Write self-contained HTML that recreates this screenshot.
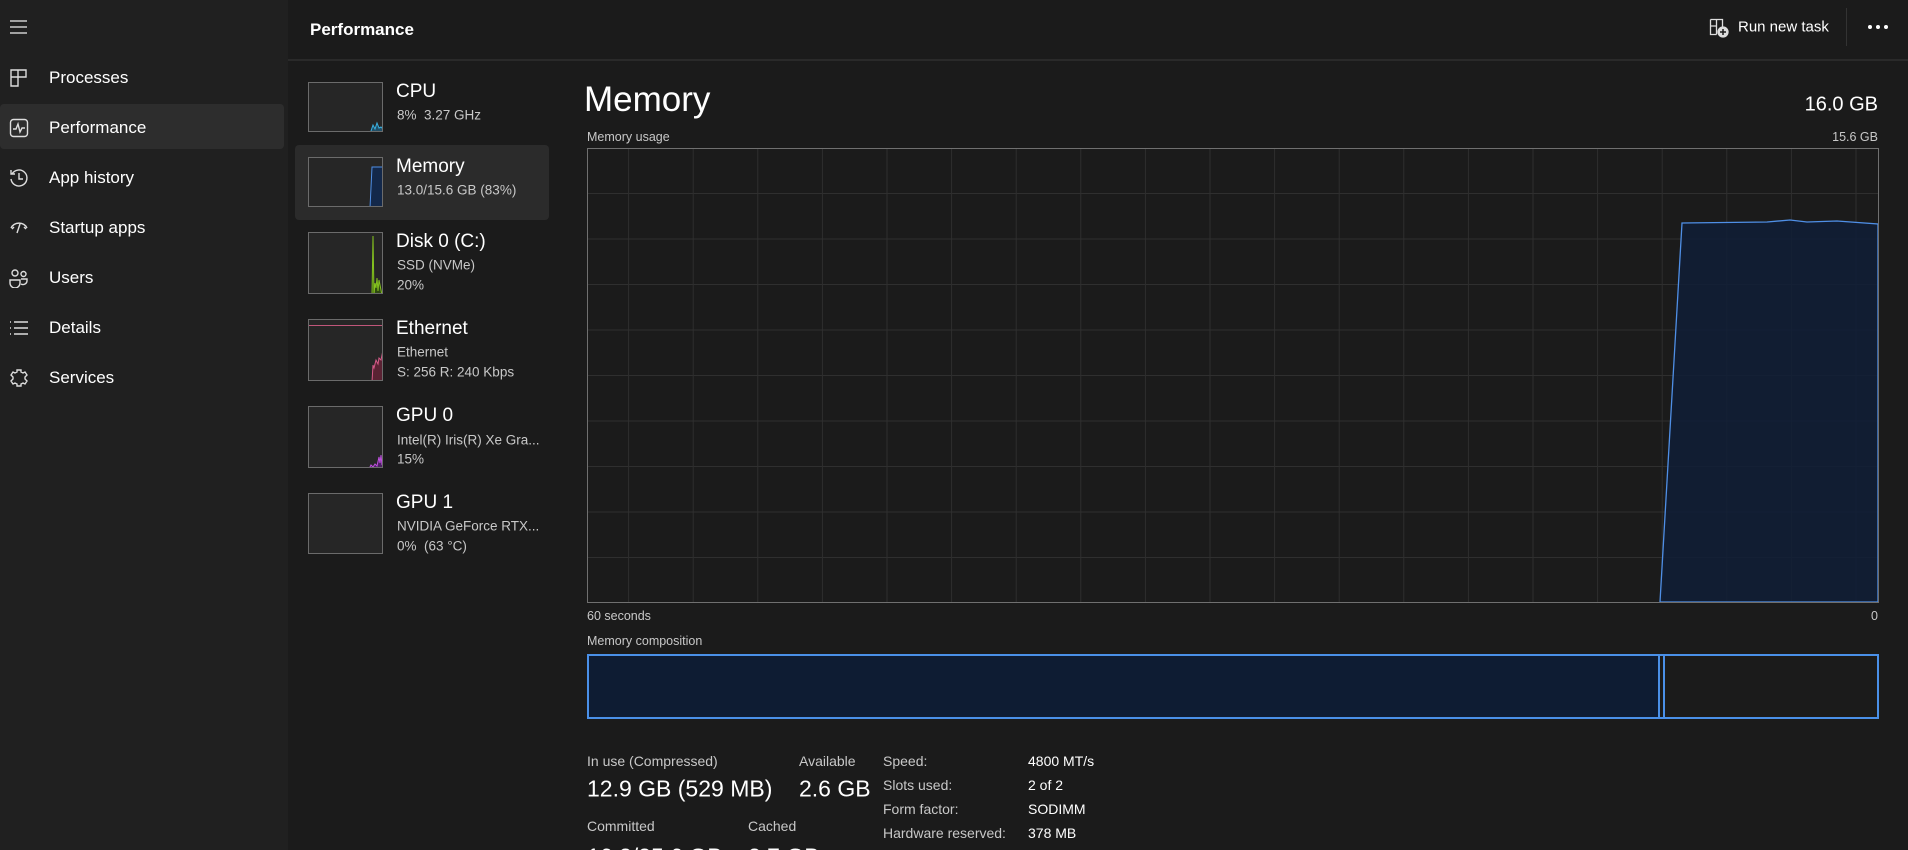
<!DOCTYPE html>
<html><head><meta charset="utf-8"><style>
*{margin:0;padding:0;box-sizing:border-box}
html,body{width:1908px;height:850px;overflow:hidden}
body{background:#1b1b1b;font-family:"Segoe UI","Liberation Sans",sans-serif;color:#fff}
#root{position:relative;width:1908px;height:850px;overflow:hidden}
.a{position:absolute;white-space:nowrap}
#side{position:absolute;left:0;top:0;width:288px;height:850px;background:#202020}
.nav{position:absolute;left:49px;font-size:17px;transform:translateY(-50%)}
.ic{position:absolute;left:9px;width:20px;height:20px}
.th{position:absolute;left:308px;width:75px;background:#262626;border:1px solid #6b6b6b;overflow:hidden}
.t1{position:absolute;left:396px;font-size:19px;transform:translateY(-50%)}
.t2{position:absolute;left:397px;font-size:13.5px;color:#c8c8c8;transform:translateY(-50%)}
.lb{position:absolute;font-size:14px;color:#c8c8c8;transform:translateY(-50%)}
.vl{position:absolute;font-size:23px;transform:translateY(-50%)}
.rv{position:absolute;font-size:14px;color:#fff;transform:translateY(-50%)}
</style></head><body><div id="root">
<div id="side"></div>
<div class="a" style="left:288px;top:59px;width:1620px;height:2px;background:#2a2a2a"></div>
<svg class="a" style="left:9px;top:19px" width="20" height="16" stroke="#ccc" stroke-width="1.4"><path d="M1 2H18M1 8H18M1 14H18"/></svg>
<div class="a" style="left:0;top:104px;width:284px;height:45px;background:#2d2d2d;border-radius:4px"></div>
<svg class="ic" style="top:68px" viewBox="0 0 20 20" fill="none" stroke="#ddd" stroke-width="1.4"><path d="M2 2h7v7H2zM9 2h8v7H9zM2 9h7v9H2z"/></svg>
<svg class="ic" style="top:118px" viewBox="0 0 20 20" fill="none" stroke="#ddd" stroke-width="1.4"><rect x="1.5" y="1.5" width="17" height="17" rx="3"/><path d="M4 11h3l2-5 2 8 2-4h3"/></svg>
<svg class="ic" style="top:168px" viewBox="0 0 20 20" fill="none" stroke="#ddd" stroke-width="1.4"><path d="M3 6A8 8 0 1 1 2 11M2 2v4h4M10 5v6h4"/></svg>
<svg class="ic" style="top:218px" viewBox="0 0 20 20" fill="none" stroke="#ddd" stroke-width="1.4"><path d="M2 10a9 9 0 0 1 16 0M11 6l-3 9M5 9l-2 2M15 9l2 2"/></svg>
<svg class="ic" style="top:268px" viewBox="0 0 20 20" fill="none" stroke="#ddd" stroke-width="1.4"><circle cx="6" cy="5" r="3"/><circle cx="14.5" cy="6" r="2.5"/><path d="M1 12h10v3a5 5 0 0 1-10 0zM12 11h6v2a4 4 0 0 1-6 3"/></svg>
<svg class="ic" style="top:318px" viewBox="0 0 20 20" fill="none" stroke="#ddd" stroke-width="1.4"><path d="M1 4h1M1 10h1M1 16h1M5 4h14M5 10h14M5 16h14"/></svg>
<svg class="ic" style="top:368px" viewBox="0 0 20 20" fill="none" stroke="#ddd" stroke-width="1.4"><path d="M8 2h4v2l2 1 2-1 2 3-2 2v2l2 2-2 3-2-1-2 1v2H8v-2l-2-1-2 1-2-3 2-2V9L2 7l2-3 2 1 2-1z"/></svg>
<div class="nav" style="top:78px">Processes</div>
<div class="nav" style="top:128px">Performance</div>
<div class="nav" style="top:178px">App history</div>
<div class="nav" style="top:228px">Startup apps</div>
<div class="nav" style="top:278px">Users</div>
<div class="nav" style="top:328px">Details</div>
<div class="nav" style="top:378px">Services</div>

<div class="a" style="left:310px;top:30px;transform:translateY(-50%);font-size:17px;font-weight:bold">Performance</div>
<svg class="a" style="left:1709px;top:18px" width="20" height="20" fill="none" stroke="#ddd" stroke-width="1.3"><path d="M1.5 1.5h12v7M1.5 1.5v15h6M1.5 8h6M7.5 1.5v15"/><circle cx="14" cy="14" r="5" fill="#ddd"/><path d="M14 11v6M11 14h6" stroke="#1b1b1b" stroke-width="1.5"/></svg>
<div class="a" style="left:1738px;top:27px;transform:translateY(-50%);font-size:15px">Run new task</div>
<div class="a" style="left:1846px;top:8px;width:1px;height:38px;background:#333"></div>
<div class="a" style="left:1868px;top:25px;font-size:0">
<span style="display:inline-block;width:4px;height:4px;border-radius:2px;background:#fff;margin-right:4px"></span><span style="display:inline-block;width:4px;height:4px;border-radius:2px;background:#fff;margin-right:4px"></span><span style="display:inline-block;width:4px;height:4px;border-radius:2px;background:#fff"></span></div>

<div class="a" style="left:295px;top:145px;width:254px;height:75px;background:#2b2b2b;border-radius:4px"></div>
<div class="th" style="top:82px;height:50px"><svg width="75" height="50"><path d="M62 48L64 42L66 46L68 40L70 45L72 44L74 46V50H62Z" fill="#1f4e66" stroke="#3ab0e0"/></svg></div>
<div class="th" style="top:157px;height:50px"><svg width="75" height="50"><path d="M61 50L63 9H75V50Z" fill="#13284a" stroke="#4f8fe6"/></svg></div>
<div class="th" style="top:232px;height:62px"><svg width="75" height="62"><path d="M63 62L64 3L65 62L66 50L67 55L68 45L69 58L70 47L71 52L73 62Z" fill="#2f4a10" stroke="#84c21f"/></svg></div>
<div class="th" style="top:319px;height:62px"><div style="position:absolute;left:0;right:0;top:5px;height:1px;background:#c0567a"></div><svg width="75" height="62"><path d="M63 62L64 45L65 48L67 40L69 44L70 38L72 40L74 30V62Z" fill="#5a2233" stroke="#d65a88"/></svg></div>
<div class="th" style="top:406px;height:62px"><svg width="75" height="62"><path d="M60 62L62 58L64 60L66 57L68 59L70 50L71 56L72 48L73 58L74 55V62Z" fill="#4a2060" stroke="#c050e0"/></svg></div>
<div class="th" style="top:493px;height:61px"></div>
<div class="t1" style="top:92px">CPU</div><div class="t2" style="top:115px">8%&nbsp; 3.27 GHz</div>
<div class="t1" style="top:167px">Memory</div><div class="t2" style="top:190px">13.0/15.6 GB (83%)</div>
<div class="t1" style="top:242px">Disk 0 (C:)</div><div class="t2" style="top:265px">SSD (NVMe)</div><div class="t2" style="top:285px">20%</div>
<div class="t1" style="top:329px">Ethernet</div><div class="t2" style="top:352px">Ethernet</div><div class="t2" style="top:372px">S: 256 R: 240 Kbps</div>
<div class="t1" style="top:416px">GPU 0</div><div class="t2" style="top:440px">Intel(R) Iris(R) Xe Gra...</div><div class="t2" style="top:459px">15%</div>
<div class="t1" style="top:503px">GPU 1</div><div class="t2" style="top:526px">NVIDIA GeForce RTX...</div><div class="t2" style="top:546px">0%&nbsp; (63 °C)</div>

<div class="a" style="left:584px;top:100px;transform:translateY(-50%);font-size:35px">Memory</div>
<div class="a" style="right:30px;top:105px;transform:translateY(-50%);font-size:20px">16.0 GB</div>
<div class="lb" style="left:587px;top:137px;font-size:12.5px">Memory usage</div>
<div class="lb" style="right:30px;top:137px;font-size:12.5px">15.6 GB</div>
<svg class="a" style="left:587px;top:148px" width="1292" height="455">
<g stroke="#2f2f2f" stroke-width="1">
<path d="M0 45.5H1292M0 91H1292M0 136.5H1292M0 182H1292M0 227.5H1292M0 273H1292M0 318.5H1292M0 364H1292M0 409.5H1292"/>
<path d="M1269 0V455M1204.4 0V455M1139.8 0V455M1075.2 0V455M1010.6 0V455M946 0V455M881.4 0V455M816.8 0V455M752.2 0V455M687.6 0V455M623 0V455M558.4 0V455M493.8 0V455M429.2 0V455M364.6 0V455M300 0V455M235.4 0V455M170.8 0V455M106.2 0V455M41.6 0V455"/>
</g>
<path d="M1073 454L1095 75L1180 74L1203 72L1220 74L1250 73L1291 76V454Z" fill="#0f1d36" fill-opacity="0.85" stroke="#4f8fe6" stroke-width="1.3"/>
<rect x="0.5" y="0.5" width="1291" height="454" fill="none" stroke="#707070"/>
</svg>
<div class="lb" style="left:587px;top:616px;font-size:12.5px">60 seconds</div>
<div class="lb" style="right:30px;top:616px;font-size:12.5px">0</div>
<div class="lb" style="left:587px;top:641px;font-size:12.5px">Memory composition</div>
<div class="a" style="left:587px;top:654px;width:1292px;height:65px;border:2px solid #4a90e8"></div>
<div class="a" style="left:589px;top:656px;width:1069px;height:61px;background:#0e1c33"></div>
<div class="a" style="left:1658px;top:654px;width:2px;height:65px;background:#4a90e8"></div>
<div class="a" style="left:1663px;top:654px;width:2px;height:65px;background:#4a90e8"></div>

<div class="lb" style="left:587px;top:761px">In use (Compressed)</div>
<div class="vl" style="left:587px;top:789px">12.9 GB (529 MB)</div>
<div class="lb" style="left:799px;top:761px">Available</div>
<div class="vl" style="left:799px;top:789px">2.6 GB</div>
<div class="lb" style="left:587px;top:826px">Committed</div>
<div class="lb" style="left:748px;top:826px">Cached</div>
<div class="vl" style="left:587px;top:857px">16.2/25.6 GB</div>
<div class="vl" style="left:748px;top:857px">2.7 GB</div>
<div class="lb" style="left:883px;top:761px">Speed:</div><div class="rv" style="left:1028px;top:761px">4800 MT/s</div>
<div class="lb" style="left:883px;top:785px">Slots used:</div><div class="rv" style="left:1028px;top:785px">2 of 2</div>
<div class="lb" style="left:883px;top:809px">Form factor:</div><div class="rv" style="left:1028px;top:809px">SODIMM</div>
<div class="lb" style="left:883px;top:833px">Hardware reserved:</div><div class="rv" style="left:1028px;top:833px">378 MB</div>
</div></body></html>
